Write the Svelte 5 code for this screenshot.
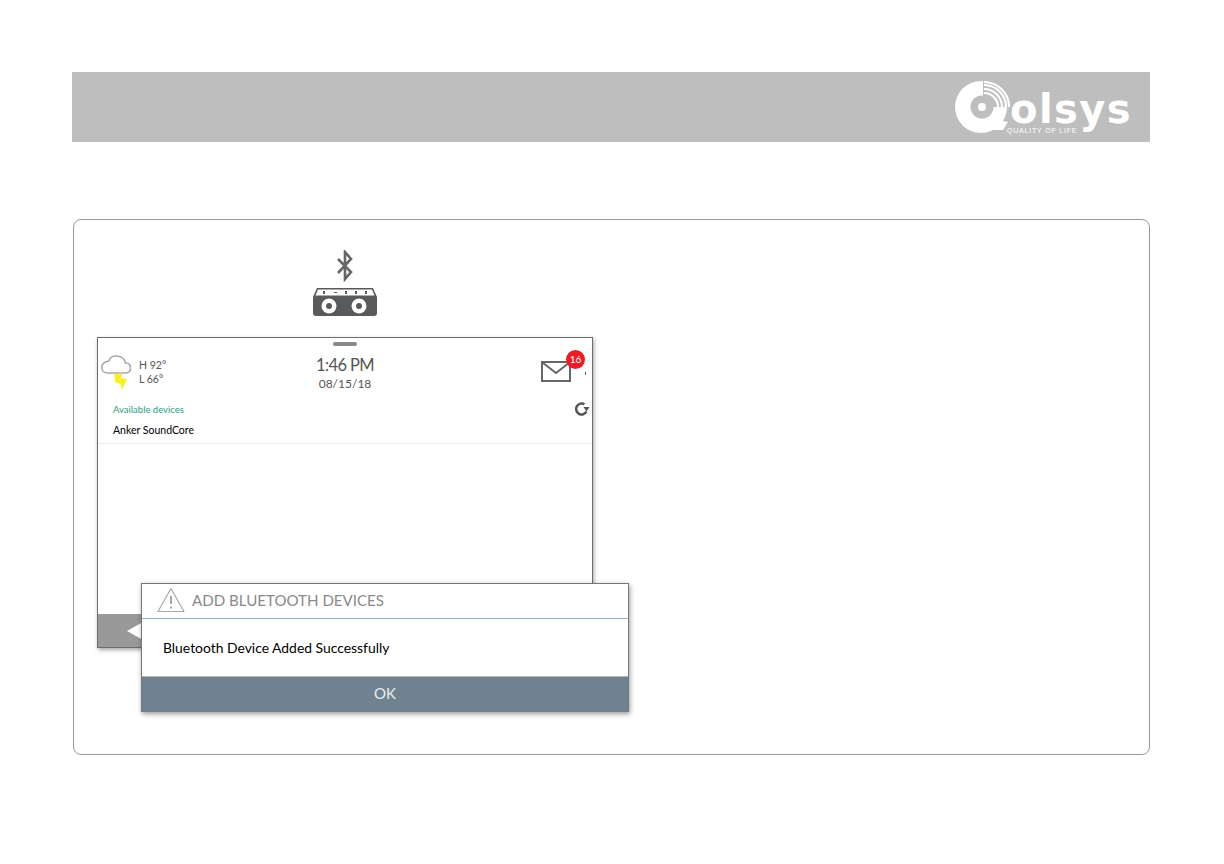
<script>
  let arcs = [14, 18, 22, 25];

  function quarterArc(r) {
    return `M31 ${27 - r} A${r} ${r} 0 0 1 ${31 + r} 27`;
  }
</script>

<div class="page">
  <header class="banner">
    <div class="logo">
      <svg class="logo-mark" width="62" height="60" viewBox="0 0 62 60">
        <path d="M34 38 L55 42 L50 50 L34 50 Z" fill="#fff" />
        <circle cx="28" cy="27" r="26" fill="#fff" />
        <circle cx="29" cy="27" r="11.500" fill="#bebebe" />
        <path d="M30 27 L30 0 A28 28 0 0 1 58 27 Z" fill="#bebebe" />
        {#each arcs as r}
          <path d={quarterArc(r)} fill="none" stroke="#fff" stroke-width="2.200" />
        {/each}
        <circle cx="29" cy="27" r="4" fill="#fff" />
      </svg>
      <div class="wordmark">olsys</div>
      <div class="tagline">QUALITY OF LIFE</div>
    </div>
  </header>

  <section class="card">
    <div class="device-icon">
      <svg width="18" height="32" viewBox="0 0 18 32">
        <path d="M2 9 L15 22 L9 29 L9 2 L15 9 L2 23" fill="none" stroke="#666" stroke-width="2.600" />
      </svg>
      <svg width="66" height="30" viewBox="0 0 66 30">
        <path d="M5 1 H61 L65 10 V26 Q65 29 62 29 H4 Q1 29 1 26 V10 Z" fill="#595a5c" />
        <path d="M6 2.500 H60 L62.500 8.500 H3.500 Z" fill="#fff" />
        <g fill="#595a5c">
          <rect x="11" y="4" width="2" height="3" />
          <rect x="22" y="5" width="3" height="1" />
          <rect x="33" y="4" width="2" height="3" />
          <rect x="43" y="4" width="2" height="3" />
          <rect x="53" y="4" width="2" height="3" />
        </g>
        <circle cx="17" cy="19" r="7.500" fill="#fff" />
        <circle cx="17" cy="19" r="3" fill="#595a5c" />
        <circle cx="47" cy="19" r="7.500" fill="#fff" />
        <circle cx="47" cy="19" r="3" fill="#595a5c" />
      </svg>
    </div>

    <div class="stage">
      <div class="screen">
        <div class="pill"></div>
        <div class="status">
          <div class="weather">
            <svg width="34" height="36" viewBox="0 0 34 36">
              <path d="M7 18 H24 Q29.500 18 29.500 13 Q29.500 8 24.500 8 Q23 1 15 1 Q9 1 8 6 Q0.800 7 0.800 12.500 Q0.800 18 7 18 Z" fill="#fff" stroke="#aaa" stroke-width="1.500" />
              <path d="M13 19 L21 18.500 L20 23 L26 24 L21 35 L19.500 29 L14.500 27.500 Z" fill="#f9f01f" />
            </svg>
            <div class="temps">
              <div>H 92°</div>
              <div>L 66°</div>
            </div>
          </div>
          <div class="clock">
            <div class="time">1:46 PM</div>
            <div class="date">08/15/18</div>
          </div>
          <div class="mail">
            <svg width="30" height="21" viewBox="0 0 30 21">
              <rect x="1" y="1" width="28" height="19" fill="#fff" stroke="#666" stroke-width="2" />
              <path d="M1.500 1.500 L15 12 L28.500 1.500" fill="none" stroke="#666" stroke-width="2" />
            </svg>
            <span class="badge">16</span>
            <span class="tick"></span>
          </div>
        </div>

        <div class="list-head">
          <span class="list-title">Available devices</span>
          <svg width="16" height="16" viewBox="0 0 16 16">
            <path d="M12.500 10.500 A5.500 5.500 0 1 1 10.500 3.300" fill="none" stroke="#555" stroke-width="2.500" />
            <path d="M9.500 6 L15.500 6 L12.500 10.500 Z" fill="#555" />
          </svg>
        </div>
        <div class="list-row">Anker SoundCore</div>
        <div class="list-body"></div>
        <div class="nav">
          <svg width="16" height="18" viewBox="0 0 16 18"><path d="M0 9 L16 0 V18 Z" fill="#fff" /></svg>
        </div>
      </div>

      <div class="dialog">
        <div class="dialog-title">
          <svg width="28" height="26" viewBox="0 0 28 26">
            <path d="M14 1.500 L27 24.500 H1 Z" fill="none" stroke="#a8a8a8" stroke-width="1.200" stroke-linejoin="round" />
            <path d="M14 9 V17 M14 19.500 V21.500" stroke="#8a8a8a" stroke-width="1.500" />
          </svg>
          <span>ADD BLUETOOTH DEVICES</span>
        </div>
        <div class="dialog-body">Bluetooth Device Added Successfully</div>
        <div class="dialog-button">OK</div>
      </div>
    </div>
  </section>
</div>

<style>
  :global(body) {
    background: #fff;
    font-family: "Lato", "Liberation Sans", sans-serif;
  }
  .page {
    width: 1078px;
    margin-left: 72px;
    padding-top: 72px;
  }
  .banner {
    height: 70px;
    background: #bebebe;
    display: flex;
    justify-content: flex-end;
    position: relative;
  }
  .logo {
    position: relative;
    width: 197px;
    height: 70px;
  }
  .logo-mark {
    position: absolute;
    left: 0;
    top: 8px;
  }
  .wordmark {
    position: absolute;
    left: 57px;
    top: 22px;
    font-family: "DejaVu Sans", sans-serif;
    font-weight: 700;
    font-size: 40px;
    line-height: 30px;
    letter-spacing: 1.400px;
    color: #fff;
  }
  .tagline {
    position: absolute;
    left: 54px;
    top: 55px;
    font-family: "Liberation Sans", sans-serif;
    font-size: 7px;
    line-height: 8px;
    letter-spacing: 0.800px;
    color: #fff;
  }
  .card {
    box-sizing: border-box;
    height: 536px;
    margin: 77px 0 0 1px;
    border: 1px solid #9a9a9a;
    border-radius: 8px;
    padding: 30px 0 0 23px;
  }
  .device-icon {
    width: 496px;
    display: flex;
    flex-direction: column;
    align-items: center;
    gap: 5px;
    height: 87px;
  }
  .device-icon svg {
    display: block;
  }
  .stage {
    position: relative;
  }
  .screen {
    box-sizing: border-box;
    width: 496px;
    height: 311px;
    border: 1px solid #6d6d6d;
    box-shadow: 1px 2px 4px rgba(0, 0, 0, 0.35);
    display: flex;
    flex-direction: column;
    background: #fff;
  }
  .pill {
    width: 24px;
    height: 4px;
    border-radius: 2px;
    background: #888;
    margin: 4px auto 0;
    flex: none;
  }
  .status {
    display: grid;
    grid-template-columns: 1fr 1fr 1fr;
    height: 47px;
    flex: none;
    padding-top: 5px;
    box-sizing: border-box;
  }
  .weather {
    display: flex;
    align-items: flex-start;
    gap: 4px;
    padding: 4px 0 0 3px;
  }
  .temps {
    font-size: 10.500px;
    line-height: 14px;
    color: #555;
    padding-top: 3px;
  }
  .clock {
    text-align: center;
    color: #555;
    padding-top: 2px;
  }
  .time {
    font-size: 16.500px;
    line-height: 24px;
    letter-spacing: -0.600px;
  }
  .date {
    font-size: 12px;
    line-height: 14px;
  }
  .mail {
    position: relative;
    display: flex;
    justify-content: flex-end;
    align-items: flex-start;
    padding: 10px 21px 0 0;
  }
  .badge {
    position: absolute;
    right: 7px;
    top: -1px;
    width: 19px;
    height: 19px;
    border-radius: 50%;
    background: #ed1c24;
    color: #fff;
    font-size: 10px;
    line-height: 19px;
    text-align: center;
  }
  .tick {
    position: absolute;
    right: 6px;
    top: 21px;
    width: 1px;
    height: 3px;
    background: #555;
  }
  .list-head {
    display: flex;
    justify-content: space-between;
    align-items: center;
    padding: 0 2px 0 15px;
    height: 20px;
    margin-top: 6px;
    flex: none;
  }
  .list-title {
    font-size: 9.500px;
    color: #2a9d84;
  }
  .list-row {
    flex: none;
    height: 25px;
    padding: 4px 0 0 15px;
    box-sizing: border-box;
    font-size: 10.500px;
    line-height: 14px;
    color: #000;
    border-bottom: 1px solid #eaeaea;
  }
  .list-body {
    flex: 1;
  }
  .nav {
    flex: none;
    height: 33px;
    background: #999;
    display: flex;
    align-items: center;
    padding-left: 29px;
  }
  .dialog {
    position: absolute;
    left: 44px;
    top: 246px;
    box-sizing: border-box;
    width: 488px;
    height: 129px;
    background: #fff;
    border: 1px solid #777;
    border-bottom: 0;
    box-shadow: 1px 2px 5px rgba(0, 0, 0, 0.4);
    display: flex;
    flex-direction: column;
  }
  .dialog-title {
    flex: none;
    height: 35px;
    box-sizing: border-box;
    border-bottom: 1px solid #8fb8c8;
    display: flex;
    align-items: center;
    gap: 7px;
    padding: 0 0 2px 15px;
    font-size: 15.100px;
    color: #8a8a8a;
  }
  .dialog-body {
    flex: 1;
    display: flex;
    align-items: center;
    padding-left: 21px;
    font-size: 13.900px;
    color: #000;
    border-bottom: 1px solid #b5b5b5;
  }
  .dialog-button {
    flex: none;
    height: 35px;
    background: #6f8290;
    color: #e8edf0;
    font-size: 15px;
    line-height: 33px;
    text-align: center;
  }
</style>
